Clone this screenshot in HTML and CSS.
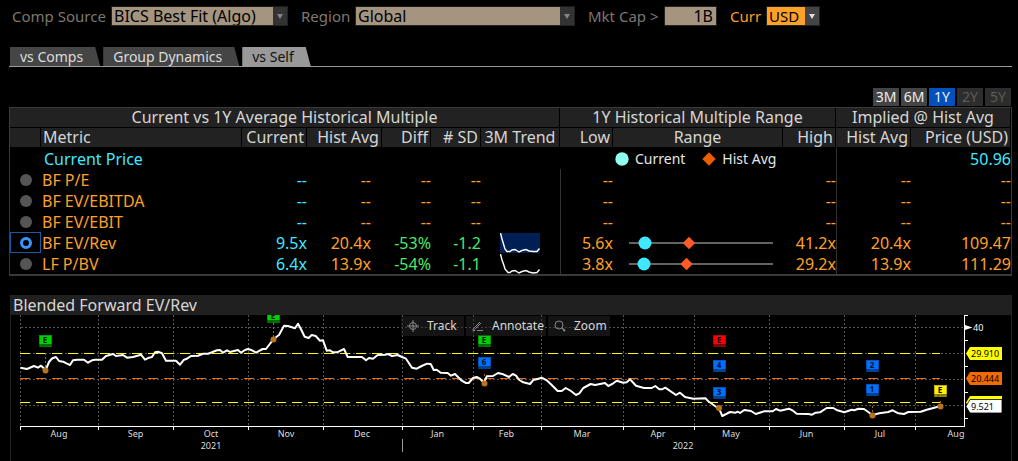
FILE: index.html
```html
<!DOCTYPE html>
<html lang="en">
<head>
<meta charset="utf-8">
<title>Relative Valuation</title>
<link rel="stylesheet" href="styles.css">
</head>
<body>
<form class="filters">
  <div class="field source"><label for="source">Comp Source</label>
    <span class="combo"><select id="source"><option>BICS Best Fit (Algo)</option></select><span class="arrow"></span></span></div>
  <div class="field region"><label for="region">Region</label>
    <span class="combo"><select id="region"><option>Global</option></select><span class="arrow"></span></span></div>
  <div class="field cap"><label for="cap">Mkt Cap &gt;</label><input id="cap" type="text" value="1B"></div>
  <div class="field curr"><label for="curr">Curr</label>
    <span class="combo"><select id="curr"><option>USD</option></select><span class="arrow"></span></span></div>
</form>

<nav class="tabs">
  <button type="button" class="tab">vs Comps</button>
  <button type="button" class="tab">Group Dynamics</button>
  <button type="button" class="tab active">vs Self</button>
</nav>

<div class="periods">
  <button type="button">3M</button>
  <button type="button">6M</button>
  <button type="button" class="active">1Y</button>
  <button type="button" disabled>2Y</button>
  <button type="button" disabled>5Y</button>
</div>

<table class="multiples">
  <colgroup>
    <col class="c-pick"><col class="c-metric"><col class="c-current"><col class="c-avg"><col class="c-diff"><col class="c-sd"><col class="c-trend">
    <col class="c-low"><col class="c-range"><col class="c-high"><col class="c-avg"><col class="c-price">
  </colgroup>
  <thead>
    <tr><th colspan="7">Current vs 1Y Average Historical Multiple</th><th colspan="3">1Y Historical Multiple Range</th><th colspan="2">Implied @ Hist Avg</th></tr>
    <tr><th></th><th class="left">Metric</th><th class="num">Current</th><th class="num">Hist Avg</th><th class="num">Diff</th><th class="num"># SD</th><th class="trend">3M Trend</th><th class="num">Low</th><th>Range</th><th class="num">High</th><th class="num">Hist Avg</th><th class="num">Price (USD)</th></tr>
  </thead>
  <tbody>
    <tr class="price-row"><td></td><td class="left">Current Price</td><td></td><td></td><td></td><td></td><td></td><td></td>
      <td colspan="2"><div class="legend">
        <svg width="14" height="14" viewBox="0 0 14 14"><circle cx="7" cy="7" r="6.7" fill="#8ffff0"/></svg><span>Current</span>
        <svg class="gap" width="14" height="14" viewBox="0 0 14 14"><path d="M7 .3 13.7 7 7 13.7.3 7Z" fill="#ea5e00"/></svg><span>Hist Avg</span></div></td>
      <td class="split"></td><td class="num">50.96</td></tr>
    <tr><td class="pick"><input type="radio" name="metric" id="pe"></td><td class="left"><label for="pe">BF P/E</label></td><td class="num cyan">--</td><td class="num shift">--</td><td class="num">--</td><td class="num">--</td><td></td><td class="num split">--</td><td></td><td class="num">--</td><td class="num split">--</td><td class="num">--</td></tr>
    <tr><td class="pick"><input type="radio" name="metric" id="ebitda"></td><td class="left"><label for="ebitda">BF EV/EBITDA</label></td><td class="num cyan">--</td><td class="num shift">--</td><td class="num">--</td><td class="num">--</td><td></td><td class="num split">--</td><td></td><td class="num">--</td><td class="num split">--</td><td class="num">--</td></tr>
    <tr><td class="pick"><input type="radio" name="metric" id="ebit"></td><td class="left"><label for="ebit">BF EV/EBIT</label></td><td class="num cyan">--</td><td class="num shift">--</td><td class="num">--</td><td class="num">--</td><td></td><td class="num split">--</td><td></td><td class="num">--</td><td class="num split">--</td><td class="num">--</td></tr>
    <tr><td class="pick selected"><input type="radio" name="metric" id="rev" checked></td><td class="left"><label for="rev">BF EV/Rev</label></td><td class="num cyan">9.5x</td><td class="num shift">20.4x</td><td class="num green">-53%</td><td class="num green">-1.2</td>
      <td class="graph"><svg width="40" height="20" viewBox="0 0 40 20"><path fill="#001f55" d="M0 0h40v20H0z"/><path class="spark" d="M.5 0 2 6 3.500 11 5 16 7 18.500 10 18.500 12 17 15 16.500 19 19 22 17.500 26 16.500 29 18 33 18.500 37 18.500 39.500 15.500"/></svg></td>
      <td class="num split">5.6x</td>
      <td class="graph range"><svg width="144" height="14" viewBox="0 0 144 14"><path d="M0 7h144" stroke="#858585" stroke-width="1.600"/><circle cx="16" cy="7" r="6.500" fill="#40e8ff"/><path d="M60 .8 66.200 7 60 13.200 53.800 7Z" fill="#ff5a28"/></svg></td>
      <td class="num">41.2x</td><td class="num split">20.4x</td><td class="num">109.47</td></tr>
    <tr><td class="pick"><input type="radio" name="metric" id="pbv"></td><td class="left"><label for="pbv">LF P/BV</label></td><td class="num cyan">6.4x</td><td class="num shift">13.9x</td><td class="num green">-54%</td><td class="num green">-1.1</td>
      <td class="graph"><svg width="40" height="20" viewBox="0 0 40 20"><path class="spark" d="M.5 0 2 6 3.500 10 5 15 8 18.500 10 18.500 12 17 15 16.500 19 19 22 17.500 26 16.500 29 18 33 19 37 18.500 39.500 15.500"/></svg></td>
      <td class="num split">3.8x</td>
      <td class="graph range"><svg width="144" height="14" viewBox="0 0 144 14"><path d="M0 7h144" stroke="#858585" stroke-width="1.600"/><circle cx="15" cy="7" r="6.500" fill="#40e8ff"/><path d="M57.500 .8 63.700 7 57.500 13.200 51.300 7Z" fill="#ff5a28"/></svg></td>
      <td class="num">29.2x</td><td class="num split">13.9x</td><td class="num">111.29</td></tr>
  </tbody>
</table>

<section class="panel">
  <h2>Blended Forward EV/Rev</h2>
  <div class="plot">
    <svg class="chart" viewBox="11 315 1000 146">
      <defs>
        <g id="flag"><path d="M0 0h13v12H0z"/><path d="M0 9h13v3H0z" fill="#000" opacity=".42"/><path d="M0 .5h13M.5 0v12M12.500 0v12" stroke="#000" opacity=".25"/></g>
        <g id="ticks"><path d="M4 10h2M7 10h1M9 10h2M3 11h2" stroke="#000" opacity=".35"/></g>
      </defs>
      <path class="grid" d="M20.500 315V426M98.500 315V426M173.500 315V426M248.500 315V426M323.500 315V426M402.500 315V426M473.500 315V426M541.500 315V426M623.500 315V426M694.500 315V426M769.500 315V426M844.500 315V426M915.500 315V426M21 327.500H964M21 353.500H964M21 379.500H964M21 405.500H964"/>
      <path class="band" stroke="#ffff00" d="M20 353.500H940M20 402.500H940"/>
      <path class="band" stroke="#f26a00" d="M20 378.500H940"/>
      <path class="stem" d="M45.500 353V368M273.500 323V337M484.500 374V381M872.500 402V413M940.500 401V405"/>
      <polyline class="series" points="20.5,367.7 27,369 34,366 38,367.7 41,365.7 45.7,370 49,362 52,358.5 56,357 59,361 63,361.7 67,363.7 70,365 73,360.3 77,359.7 84,359.7 88,362.7 92,360.3 95,359.7 102,359.7 106,356 113,354 116,356 123,355 127,357.7 133,357 141,354.7 145,359.7 149,357.7 152,357 155,352.3 158,351.7 162,353.3 166,360.7 176,360.7 180,364.7 184,359.7 187,358.7 191,356 198,355.7 203,353.7 208,353.7 212,352.3 217,350.3 220,350 223,352.7 227,350.3 230,352 238,350 241,352.7 245,350 248,349 252,350.3 256,352.7 262.7,349 266,349 273.3,339.3 279,335 284,325.7 288,326 295,328.3 298,323.7 301,329.3 304.7,336.7 308.7,338 311.7,335 315.7,336 320,340.7 323,340.3 326.7,350.7 330,350.3 333,352.3 337,352.3 344,349 347.7,357 362,357 366,360.3 369,358 373,358.7 377.7,355 385,354.7 388,354 392,356 397.7,355 402,357 406,358.7 412,367.7 416.7,368.7 421.7,366 427,363.7 430.7,364 433.7,370 436.7,369.7 440.7,372.7 447.7,373 451,375.7 455,374 461.7,380.7 466,383 468.7,383 473,378 476.7,377 480,378.7 484,382.7 486.7,376.3 493,376 498,373 503.3,374.3 509,377 512.7,374 516,375.7 519.3,380 523.3,382.3 530,384 533.3,380 536.7,379.3 541.7,377.7 546.7,380.3 551.7,385 557.7,391 561.7,391 565.7,388 571,391 576,395 579.3,393.3 583.3,388 590.7,384 595,385 605,383 608.3,386 613.3,383.3 616.7,380.7 623.3,382.7 626.7,382.3 630,379.3 636,385.7 644,388 651.7,388 655.3,386 659.3,389.3 662,389.3 665.3,387.7 676,395 680,392.7 685,397 693.3,398.7 705.7,398.3 708.3,401.3 716,406.7 719,408.3 722.3,416 730,412 735.7,412.7 737.7,411.7 740,413 744.3,410 751,411 755.7,414 764.3,411.3 772.7,411.3 776,409 780,410.7 789,408.7 792.3,410.3 796.7,413.7 808.3,414 812,414.7 815.7,412.7 820,412.3 826.7,408 833.3,408 837.3,410.3 844.3,412.3 851.7,409.7 854.3,410.3 858.3,408.7 864,409 870,413.3 872.7,415 879.3,413.3 888.3,412 892.7,410.3 898.3,413.3 904,414 908.3,412 920.7,411.7 926.7,409.7 940,406.3"/>
      <g class="events"><circle cx="45.500" cy="370.500" r="3"/><circle cx="273.500" cy="339.500" r="3"/><circle cx="484.500" cy="383.500" r="3"/><circle cx="719" cy="408" r="3"/><circle cx="872.500" cy="415.500" r="3"/><circle cx="940.500" cy="406.500" r="3"/></g>
      <g class="flags">
        <g transform="translate(39 335)"><use href="#flag" fill="#00d000"/><use href="#ticks"/><text x="6" y="8">E</text></g>
        <g transform="translate(267 311)"><use href="#flag" fill="#00d000"/><use href="#ticks"/><text x="6" y="8">E</text></g>
        <g transform="translate(478 335)"><use href="#flag" fill="#00d000"/><use href="#ticks"/><text x="6" y="8">E</text></g>
        <g transform="translate(478 357)"><use href="#flag" fill="#0070ff"/><text x="6" y="8">6</text></g>
        <g transform="translate(713 335)"><use href="#flag" fill="#ff0000"/><use href="#ticks"/><text x="6" y="8">E</text></g>
        <g transform="translate(713 360)"><use href="#flag" fill="#0070ff"/><text x="6" y="8">4</text></g>
        <g transform="translate(713 387)"><use href="#flag" fill="#0070ff"/><text x="6" y="8">3</text></g>
        <g transform="translate(866 360)"><use href="#flag" fill="#0070ff"/><text x="6" y="8">2</text></g>
        <g transform="translate(866 384)"><use href="#flag" fill="#0070ff"/><text x="6" y="8">1</text></g>
        <g transform="translate(934 385)"><use href="#flag" fill="#fff000"/><use href="#ticks"/><text x="6" y="8">E</text></g>
      </g>
      <path class="axis" d="M20 426.500H965M964.500 315V427M20.500 427v3M98.500 427v3M173.500 427v3M248.500 427v3M323.500 427v3M402.500 427v3M473.500 427v3M541.500 427v3M623.500 427v3M694.500 427v3M769.500 427v3M844.500 427v3M915.500 427v3M965 315.500h3M965 340.500h3M965 366.500h3M965 392.500h3M965 418.500h3"/>
      <path d="M965 325 972.500 327.500 965 330Z" fill="#fff"/>
      <path d="M402.500 439v13" stroke="#999"/>
      <g class="months">
        <text x="59" y="437">Aug</text><text x="135.500" y="437">Sep</text><text x="211" y="437">Oct</text><text x="286" y="437">Nov</text><text x="362" y="437">Dec</text><text x="437.500" y="437">Jan</text><text x="506.500" y="437">Feb</text><text x="582" y="437">Mar</text><text x="658" y="437">Apr</text><text x="731" y="437">May</text><text x="806.500" y="437">Jun</text><text x="880" y="437">Jul</text><text x="956" y="437">Aug</text>
        <text x="211" y="449">2021</text><text x="683" y="449">2022</text>
      </g>
      <path d="M966 353.500 970 347H1002V360H970Z" fill="#ffff00"/>
      <path d="M966 378.500 970 372H1002V385H970Z" fill="#f26a00"/>
      <path d="M966 402.500 970 396H1002V409H970Z" fill="#ffff00"/>
      <path d="M966 406.500 970 399.500H1002V413H970Z" fill="#fff" stroke="#000" stroke-width=".8"/>
      <g class="values"><text x="973" y="331" fill="#fff">40</text><text x="971" y="357">29.910</text><text x="971" y="382">20.444</text><text x="971" y="410">9.521</text></g>
    </svg>
    <div class="tools">
      <button type="button"><svg width="12" height="12" viewBox="0 0 12 12"><circle cx="6" cy="6" r="3.500"/><path d="M6 0v12M0 6h12"/></svg>Track</button>
      <button type="button"><svg width="12" height="12" viewBox="0 0 12 12"><path d="M1 9 8 2M2.500 9.500 9 3M1 9v1.500h2M5 10.500h6"/></svg>Annotate</button>
      <button type="button"><svg width="12" height="12" viewBox="0 0 12 12"><circle cx="5" cy="5" r="4"/><path d="M8 8l1 1"/><path d="m9 9 2 2" stroke-width="2"/></svg>Zoom</button>
    </div>
  </div>
</section>
</body>
</html>
```
FILE: styles.css
```css
* { box-sizing: border-box; }
body {
  margin: 0;
  padding: 6px 6px 0 9px;
  background: #000;
  color: #d6d6d6;
  font: 16px/20px "Noto Sans", "Open Sans", sans-serif;
}
button, input, select { font: inherit; margin: 0; border: 0; border-radius: 0; padding: 0; }
svg { display: block; }

.filters { display: flex; gap: 13px; padding-left: 3px; color: #7d7770; }
.field { display: flex; gap: 4px; white-space: nowrap; }
.field label { font-size: 15px; }
.combo { display: flex; flex: 1; border: 1px solid #24221e; border-top-color: #1b1a17; }
.combo select { flex: 1; min-width: 0; height: 18px; padding-left: 2px; appearance: none; background: #a59580; color: #000; line-height: 18px; }
.arrow { display: flex; align-items: center; justify-content: center; width: 14px; background: #333; }
.arrow::after { content: ""; border: 3px solid transparent; border-top: 5px solid #858585; border-bottom: 0; }
.source { width: 276px; }
.region { width: 274px; }
.source label { width: 95px; }
.region label { width: 50px; }
.cap { width: 129px; }
.cap label { width: 72px; }
.cap input { flex: 1; min-width: 0; height: 20px; padding-right: 3px; text-align: right; background: #a59580; border: 1px solid #24221e; color: #000; }
.curr { width: 90px; color: #ff9c26; }
.curr label { width: 32px; }
.curr .combo select { background: #ffa028; font-size: 15px; }
.curr .arrow { background: #444; }
.curr .arrow::after { border-top-color: #ddd; }

.tabs { display: flex; gap: 3px; margin-top: 21px; padding-left: 1px; border-bottom: 1px solid #999; }
.tab { height: 19px; padding: 0 17px 0 10px; background: #454545; color: #ddd; font-size: 14px; line-height: 19px; clip-path: polygon(0 0, calc(100% - 5px) 0, 100% 100%, 0 100%); }
.tab.active { background: #999; color: #111; }

.periods { display: flex; justify-content: flex-end; gap: 2px; margin-top: 21px; padding-right: 1px; }
.periods button { width: 26px; height: 18px; background: #444; color: #eee; font-size: 14px; line-height: 18px; }
.periods .active { background: #0050bd; }
.periods button:disabled { background: #2d2d2d; color: #5c5c5c; }

.multiples { width: 100%; margin-top: 1px; table-layout: fixed; border-spacing: 0; border: 1px solid #3a3a3a; border-width: 1px 1px 2px; }
.c-pick { width: 31px; }
.c-current { width: 65px; }
.c-avg { width: 75px; }
.c-diff { width: 49px; }
.c-sd { width: 50px; }
.c-trend { width: 79px; }
.c-low { width: 53px; }
.c-range { width: 170px; }
.c-high { width: 53px; }
.c-price { width: 100px; }
th, td { height: 21px; padding: 0; line-height: 20px; font-weight: 400; white-space: nowrap; text-align: center; }
th { height: 20px; background: #222; border-right: 1px solid #000; border-bottom: 1px solid #000; line-height: 19px; }
.left { padding-left: 2px; text-align: left; }
td.left { padding-left: 1px; }
.num { text-align: right; }
th.num { padding-right: 2px; }
td { color: #ffa028; }
.price-row td, td.cyan { color: #40e8ff; }
.price-row .left { padding-left: 3px; }
td.green { color: #4be868; }
.shift { padding-right: 11px; }
.split { border-left: 1px solid #333; }
.pick input { display: block; width: 12px; height: 12px; margin: 0 auto; appearance: none; border-radius: 50%; background: #555; }
.pick.selected { outline: 1px solid #1b57a5; outline-offset: -1px; }
.pick input:checked { background: #000; border: 3px solid #3c94ff; }
.graph svg { margin: 0 auto; }
.range { padding-left: 6px; }
.spark { fill: none; stroke: #fff; stroke-width: 1.4; }
.legend { display: flex; align-items: center; gap: 6px; padding-left: 2px; color: #e6e6e6; font-size: 14px; line-height: 20px; }
.legend .gap { margin-left: 11px; }

.panel { margin: 19px 0 0 1px; border: 1px solid #222; border-width: 0 1px; }
.panel h2 { margin: 0; padding-left: 2px; background: #202020; font-size: 16px; line-height: 20px; font-weight: 400; }
.plot { position: relative; }
.chart { width: 100%; }
.grid { fill: none; stroke: #555; stroke-dasharray: 2 2; }
.band { fill: none; stroke-dasharray: 10 6; }
.stem { stroke: #a8650f; stroke-dasharray: 2 2; }
.series { fill: none; stroke: #fff; stroke-width: 2; stroke-linejoin: round; }
.events { fill: #b8741a; }
.axis { fill: none; stroke: #fff; }
.flags text { font-size: 8px; font-weight: 700; text-anchor: middle; fill: #012; }
.months text { font-size: 9px; text-anchor: middle; fill: #ddd; }
.values text { font-size: 9px; }
.tools { position: absolute; top: 1px; left: 39%; display: grid; grid-template-columns: 63px 80px 62px; gap: 2px; }
.tools button { display: flex; align-items: center; gap: 8px; height: 20px; padding-left: 6px; background: rgba(40, 40, 40, .5); color: #d6d6d6; font-size: 12px; line-height: 20px; }
.tools svg { fill: none; stroke: #888; stroke-width: 1; }
```
